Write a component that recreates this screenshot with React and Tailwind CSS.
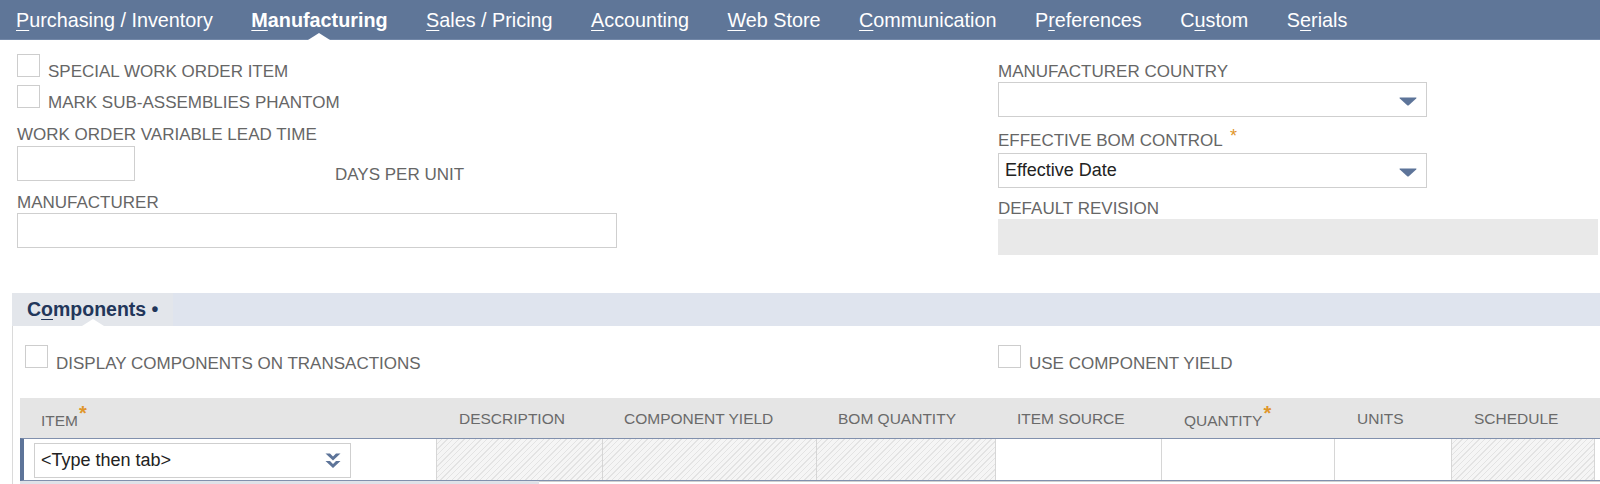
// App.jsx — item record: Manufacturing subtab with Components sublist
const HATCH = 'bg-[repeating-linear-gradient(135deg,#f5f5f5_0px,#f5f5f5_3px,#e3e3e3_3px,#e3e3e3_4px)]';

const TABS = [
  { pre: '', u: 'P', post: 'urchasing / Inventory' },
  { pre: '', u: 'M', post: 'anufacturing', active: true },
  { pre: '', u: 'S', post: 'ales / Pricing' },
  { pre: '', u: 'A', post: 'ccounting' },
  { pre: '', u: 'W', post: 'eb Store' },
  { pre: '', u: 'C', post: 'ommunication' },
  { pre: 'P', u: 'r', post: 'eferences' },
  { pre: 'C', u: 'u', post: 'stom' },
  { pre: 'S', u: 'e', post: 'rials' },
];

function Notch() {
  return (
    <span className="absolute bottom-0 left-1/2 -translate-x-1/2 w-0 h-0 border-l-[11px] border-r-[11px] border-b-[7px] border-l-transparent border-r-transparent border-b-white" />
  );
}

function Box() {
  return <span className="block w-[23px] h-[23px] shrink-0 border border-[#cdcdcd] bg-white" />;
}

function Check({ label, low }) {
  return (
    <div className="flex items-start">
      <Box />
      <span className={'ml-[8px] leading-[17px] ' + (low ? 'mt-[10px]' : 'mt-[9px]')}>{label}</span>
    </div>
  );
}

function Star() {
  return <span className="relative -top-[4px] ml-[3px] text-[18px] text-[#e0962b]">*</span>;
}

function Caret() {
  return (
    <svg width="18" height="9" viewBox="0 0 18 9" className="absolute right-[9px] top-[14px]">
      <path d="M1 0.5 H17 Q18 0.5 17.2 1.4 L9.8 8.2 Q9 8.9 8.2 8.2 L0.8 1.4 Q0 0.5 1 0.5 Z" fill="#5d7499" />
    </svg>
  );
}

function Select({ value }) {
  return (
    <div className="relative w-[429px] h-[35px] border border-[#cfcfcf] bg-white flex items-center pl-[6px] text-[18px] text-[#222]">
      {value}
      <Caret />
    </div>
  );
}

function DoubleChevron() {
  return (
    <svg width="16" height="16" viewBox="0 0 16 16" className="absolute right-[9px] top-[9px]">
      <polygon points="0.5,0.5 5,0.5 8,3.4 11,0.5 15.5,0.5 8,7.5" fill="#5d7499" />
      <polygon points="0.5,8 5,8 8,10.9 11,8 15.5,8 8,15" fill="#5d7499" />
    </svg>
  );
}

const COLS = [
  { label: 'ITEM', w: 'w-[416px] pl-[21px]', star: true },
  { label: 'DESCRIPTION', w: 'w-[166px] pl-[23px]' },
  { label: 'COMPONENT YIELD', w: 'w-[214px] pl-[22px]' },
  { label: 'BOM QUANTITY', w: 'w-[179px] pl-[22px]' },
  { label: 'ITEM SOURCE', w: 'w-[166px] pl-[22px]' },
  { label: 'QUANTITY', w: 'w-[173px] pl-[23px]', star: true },
  { label: 'UNITS', w: 'w-[117px] pl-[23px]' },
  { label: 'SCHEDULE', w: 'w-[143px] pl-[23px]' },
];

export default function App() {
  return (
    <div className="w-[1600px] h-[484px] overflow-hidden bg-white font-['Liberation_Sans',Arial,sans-serif] text-[17px] text-[#666]">
      {/* subtab bar */}
      <nav className="h-[40px] bg-[#5f7698] flex items-center pl-[16px] gap-[38.5px] text-[19.8px] text-white border-b border-[#7388a8]">
        {TABS.map(t => (
          <span key={t.u + t.post} className={'relative h-[40px] flex items-center pt-[3px] whitespace-nowrap ' + (t.active ? 'font-bold' : '')}>
            <span>{t.pre}<u className="underline-offset-[3px]">{t.u}</u>{t.post}</span>
            {t.active && <Notch />}
          </span>
        ))}
      </nav>

      <div className="flex">
        {/* left column */}
        <div className="w-[998px] pl-[17px] pt-[14px]">
          <Check label="SPECIAL WORK ORDER ITEM" />
          <div className="mt-[5px]"><Check label="MARK SUB-ASSEMBLIES PHANTOM" /></div>
          <div className="mt-[14px] leading-[20px]">WORK ORDER VARIABLE LEAD TIME</div>
          <div className="mt-[1px] flex items-start">
            <div className="w-[118px] h-[35px] border border-[#cfcfcf] bg-white" />
            <span className="ml-[200px] mt-[20px] leading-[17px]">DAYS PER UNIT</span>
          </div>
          <div className="mt-[10px] leading-[20px]">MANUFACTURER</div>
          <div className="w-[600px] h-[35px] border border-[#cfcfcf] bg-white" />
        </div>

        {/* right column */}
        <div className="flex-1 pt-[22px]">
          <div className="leading-[20px]">MANUFACTURER COUNTRY</div>
          <Select value="" />
          <div className="mt-[13px] leading-[20px]">EFFECTIVE BOM CONTROL <Star /></div>
          <div className="mt-[2px]"><Select value="Effective Date" /></div>
          <div className="mt-[11px] leading-[20px]">DEFAULT REVISION</div>
          <div className="h-[36px] mr-[2px] bg-[#e9e9e9]" />
        </div>
      </div>

      {/* Components sublist */}
      <section className="mt-[38px] ml-[12px]">
        <div className="h-[33px] flex bg-[#dfe4ee]">
          <div className="relative w-[161px] bg-[#e3e6eb] flex items-center pl-[15px] text-[19.5px] font-bold text-[#22365a]">
            <span>C<u className="underline-offset-[3px]">o</u>mponents •</span>
            <Notch />
          </div>
        </div>

        <div className="border-l border-[#dadada] pl-[7px]">
          <div className="pt-[19px] flex">
            <div className="w-[978px] pl-[5px]"><Check low label="DISPLAY COMPONENTS ON TRANSACTIONS" /></div>
            <Check low label="USE COMPONENT YIELD" />
          </div>

          <div className="mt-[26px]">
            <div className="h-[40px] flex items-center pt-[2px] bg-[#e5e5e5] text-[15.5px] text-[#6a6a6a]">
              {COLS.map(c => (
                <div key={c.label} className={c.w + ' shrink-0 whitespace-nowrap'}>
                  {c.label}{c.star && <span className="relative -top-[6px] ml-[1px] text-[20px] font-bold text-[#e0962b]">*</span>}
                </div>
              ))}
              <div className="flex-1" />
            </div>

            <div className="h-[43px] flex border-y border-y-[#8190ad] border-l-4 border-l-[#5d7499]">
              <div className="w-[412px] shrink-0 bg-white pl-[10px] pt-[4px]">
                <div className="relative w-[317px] h-[35px] border border-[#cfcfcf] bg-white flex items-center pl-[6px] text-[18px] text-[#222]">
                  &lt;Type then tab&gt;
                  <DoubleChevron />
                </div>
              </div>
              <div className={'w-[166px] shrink-0 border-l border-[#d6d6d6] ' + HATCH} />
              <div className={'w-[214px] shrink-0 border-l border-[#d6d6d6] ' + HATCH} />
              <div className={'w-[179px] shrink-0 border-l border-[#d6d6d6] ' + HATCH} />
              <div className="w-[166px] shrink-0 border-l border-[#d6d6d6] bg-white" />
              <div className="w-[173px] shrink-0 border-l border-[#d6d6d6] bg-white" />
              <div className="w-[117px] shrink-0 border-l border-[#d6d6d6] bg-white" />
              <div className={'w-[143px] shrink-0 border-l border-[#d6d6d6] ' + HATCH} />
              <div className="flex-1 border-l border-[#d6d6d6] bg-white" />
            </div>

            <div className="flex h-[5px]">
              <div className="w-[519px] bg-[#dfe2e8]" />
              <div className="flex-1 border-t border-[#d0d0d0]" />
            </div>
          </div>
        </div>
      </section>
    </div>
  );
}
